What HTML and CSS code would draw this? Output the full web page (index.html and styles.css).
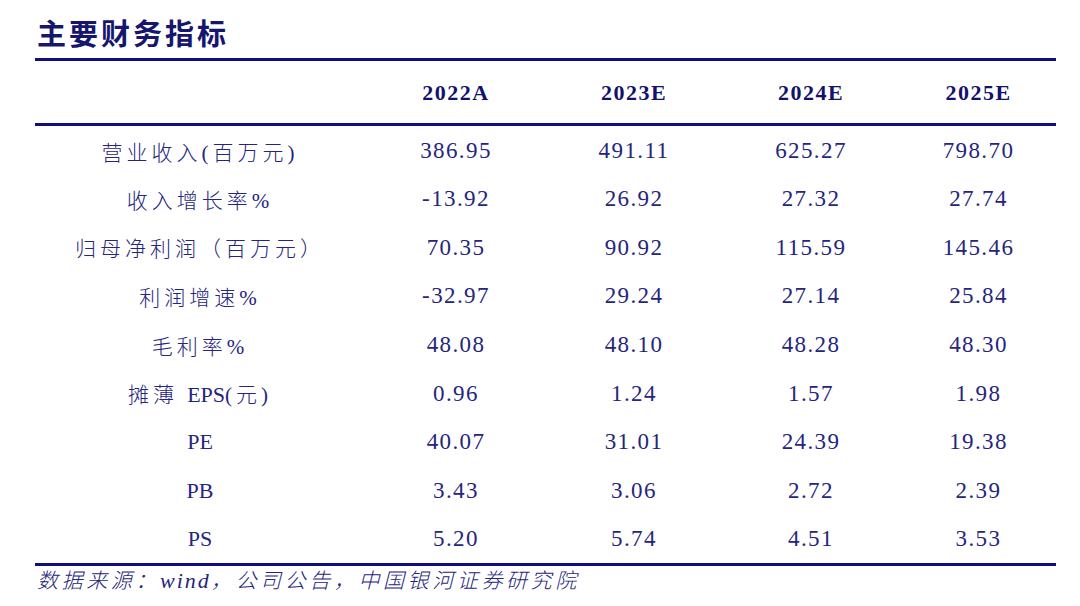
FILE: index.html
```html
<!DOCTYPE html>
<html lang="zh-CN">
<head>
<meta charset="utf-8">
<title>主要财务指标</title>
<link rel="stylesheet" href="styles.css">
</head>
<body>
<div class="page">
  <h1 class="title">主要财务指标</h1>
  <table class="fin">
    <colgroup>
      <col class="c-label">
      <col class="c-a">
      <col class="c-b">
      <col class="c-c">
      <col class="c-d">
    </colgroup>
    <thead>
      <tr class="head">
        <th></th>
        <th>2022A</th>
        <th>2023E</th>
        <th>2024E</th>
        <th>2025E</th>
      </tr>
    </thead>
    <tbody>
      <tr><td class="lbl">营业收入(百万元)</td><td>386.95</td><td>491.11</td><td>625.27</td><td>798.70</td></tr>
      <tr><td class="lbl">收入增长率%</td><td>-13.92</td><td>26.92</td><td>27.32</td><td>27.74</td></tr>
      <tr><td class="lbl">归母净利润（百万元）</td><td>70.35</td><td>90.92</td><td>115.59</td><td>145.46</td></tr>
      <tr><td class="lbl">利润增速%</td><td>-32.97</td><td>29.24</td><td>27.14</td><td>25.84</td></tr>
      <tr><td class="lbl">毛利率%</td><td>48.08</td><td>48.10</td><td>48.28</td><td>48.30</td></tr>
      <tr><td class="lbl">摊薄 <span class="lat">EPS</span>(元)</td><td>0.96</td><td>1.24</td><td>1.57</td><td>1.98</td></tr>
      <tr><td class="lbl"><span class="lat">PE</span></td><td>40.07</td><td>31.01</td><td>24.39</td><td>19.38</td></tr>
      <tr><td class="lbl"><span class="lat">PB</span></td><td>3.43</td><td>3.06</td><td>2.72</td><td>2.39</td></tr>
      <tr class="last"><td class="lbl"><span class="lat">PS</span></td><td>5.20</td><td>5.74</td><td>4.51</td><td>3.53</td></tr>
    </tbody>
  </table>
  <p class="source">数据来源：<span class="wind">wind</span>，公司公告，中国银河证券研究院</p>
</div>
</body>
</html>
```

FILE: styles.css
```css
html, body {
  margin: 0;
  padding: 0;
  background: #ffffff;
}

.page {
  padding: 14px 0 0 35px;
  width: 1021px;
  color: #1c1c78;
  font-family: "Liberation Serif", "Noto Sans CJK SC", serif;
}

.title {
  margin: 0 0 8px 2px;
  height: 36px;
  line-height: 36px;
  font-family: "Noto Sans CJK SC", sans-serif;
  font-size: 29px;
  font-weight: 700;
  letter-spacing: 3px;
  color: #16166e;
}

.fin {
  width: 1021px;
  table-layout: fixed;
  border-collapse: collapse;
  border-top: 3px solid #0e0e80;
  border-bottom: 3px solid #0e0e80;
}

.c-label { width: 330px; }
.c-a { width: 182px; }
.c-b { width: 174px; }
.c-c { width: 180px; }
.c-d { width: 155px; }

.fin th,
.fin td {
  padding: 0;
  text-align: center;
  vertical-align: middle;
}

.head {
  height: 65px;
  border-bottom: 3px solid #0e0e80;
}

.head th {
  font-size: 22px;
  font-weight: 700;
  letter-spacing: 1.5px;
  color: #12126c;
  padding-top: 2px;
}

.fin tbody tr {
  height: 48.7px;
}

.fin tbody tr.last {
  height: 50.5px;
}

.fin td {
  font-size: 23px;
  letter-spacing: 1.4px;
  color: #25257e;
  padding-top: 3px;
}

.fin tbody tr.last td {
  padding-top: 0;
}

.fin td.lbl {
  font-size: 21px;
  font-weight: 300;
  letter-spacing: 4px;
  color: #25257e;
  padding-top: 2px;
}

.fin tbody tr.last td.lbl {
  padding-top: 0;
}

.fin td.lbl .lat {
  font-size: 22px;
  font-weight: 400;
  letter-spacing: 0;
}

.source {
  margin: 3px 0 0 2px;
  line-height: 24px;
  font-size: 21px;
  font-style: italic;
  font-weight: 300;
  letter-spacing: 3.6px;
  color: #25257e;
}

.source .wind {
  font-size: 22px;
  letter-spacing: 2px;
}
```
